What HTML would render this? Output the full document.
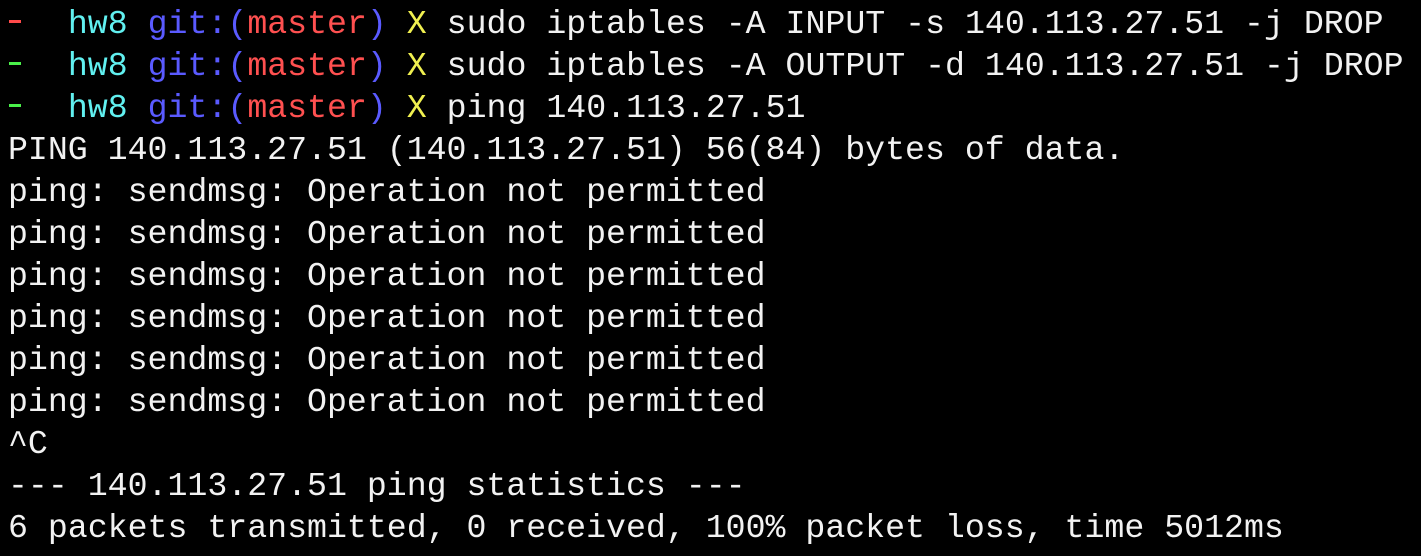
<!DOCTYPE html>
<html><head><meta charset="utf-8"><style>
html,body{margin:0;padding:0;background:#000;width:1421px;height:556px;overflow:hidden}
pre{margin:0;padding:3px 0 0 8px;font-family:"Liberation Mono","DejaVu Sans Mono",monospace;font-size:33.23px;line-height:42px;color:#f2f2f2;white-space:pre}
.c{color:#61f0f0}.b{color:#5a5aff}.r{color:#ff5050}.y{color:#f0f050}
.ar{display:inline-block;width:20px;position:relative}
.ar i{position:absolute;left:1px;top:-13px;width:12px;height:3px}
</style></head><body><pre><span class="ar"><i style="background:#ff4a4a"></i></span>  <span class="c">hw8</span> <span class="b">git:(</span><span class="r">master</span><span class="b">)</span> <span class="y">X</span> sudo iptables -A INPUT -s 140.113.27.51 -j DROP
<span class="ar"><i style="background:#4af04a"></i></span>  <span class="c">hw8</span> <span class="b">git:(</span><span class="r">master</span><span class="b">)</span> <span class="y">X</span> sudo iptables -A OUTPUT -d 140.113.27.51 -j DROP
<span class="ar"><i style="background:#4af04a"></i></span>  <span class="c">hw8</span> <span class="b">git:(</span><span class="r">master</span><span class="b">)</span> <span class="y">X</span> ping 140.113.27.51
PING 140.113.27.51 (140.113.27.51) 56(84) bytes of data.
ping: sendmsg: Operation not permitted
ping: sendmsg: Operation not permitted
ping: sendmsg: Operation not permitted
ping: sendmsg: Operation not permitted
ping: sendmsg: Operation not permitted
ping: sendmsg: Operation not permitted
^C
--- 140.113.27.51 ping statistics ---
6 packets transmitted, 0 received, 100% packet loss, time 5012ms</pre></body></html>
